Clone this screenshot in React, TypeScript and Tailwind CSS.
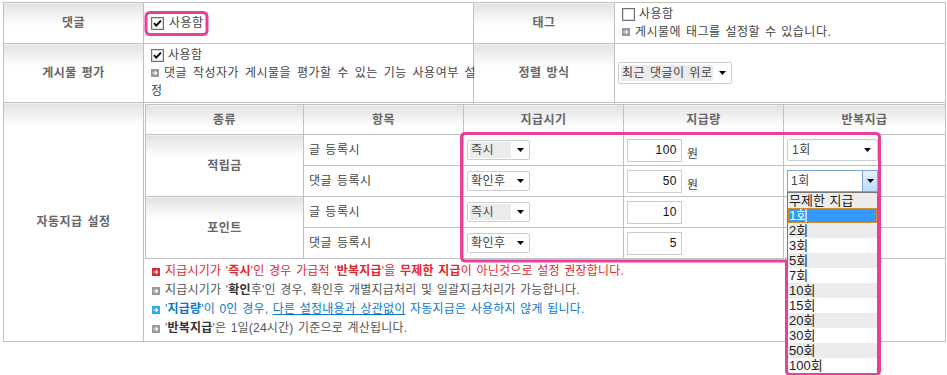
import React from "react";

const FONT = "font-['Liberation_Sans','Noto_Sans_CJK_KR',sans-serif]";
const TH =
  "border border-[#c1c1c1] bg-[linear-gradient(#e2e2e2,#fff_22px)] text-center font-bold text-[#666]";
const TD = "border border-[#c1c1c1] text-[#444]";

function CheckBox({ checked }: { checked?: boolean }) {
  return (
    <svg width="13" height="13" viewBox="0 0 13 13" className="shrink-0">
      <rect x="0.5" y="0.5" width="12" height="12" fill="#fff" stroke="#6f6f6f" />
      <rect x="1.5" y="1.5" width="10" height="10" fill="none" stroke="#dcdcdc" />
      {checked && (
        <path d="M3 6.2l2.2 2.4L10 3.6" fill="none" stroke="#000" strokeWidth="1.8" />
      )}
    </svg>
  );
}

function Bullet({ color }: { color: string }) {
  return (
    <svg width="8" height="8" viewBox="0 0 8 8" className="shrink-0">
      <rect width="8" height="8" fill={color} />
      <path d="M1.5 4h4M3.8 2.2L5.6 4 3.8 5.8" fill="none" stroke="#fff" strokeWidth="1.2" />
    </svg>
  );
}

function Caret() {
  return (
    <svg width="7" height="4" viewBox="0 0 7 4" className="shrink-0">
      <path d="M0 0h7L3.5 4z" fill="#000" />
    </svg>
  );
}

// closed select, old-style with grey highlighted value
function Select({ label, w, hl }: { label: string; w: string; hl?: boolean }) {
  return (
    <div
      className={`${w} flex items-center border border-[#cdcdcd] rounded-[2px] bg-white pl-[2px] pr-[5px] whitespace-nowrap`}
    >
      <span className={`flex-1 px-[1px] leading-[16px] ${hl ? "bg-[#ebebeb]" : ""}`}>{label}</span>
      <span className="ml-[6px] flex">
        <Caret />
      </span>
    </div>
  );
}

const repeatOptions = ["무제한 지급", "1회", "2회", "3회", "5회", "7회", "10회", "15회", "20회", "30회", "50회", "100회"];

function OpenSelect() {
  return (
    <div className="relative w-[91px]">
      <div className="h-[22px] flex items-center border border-[#7ea6d4] bg-white">
        <span className="flex-1 pl-[3px]">1회</span>
        <div className="w-[15px] h-full flex items-center justify-center border-l border-[#7ea6d4] bg-[linear-gradient(#e6f2fd,#b9dcf7)]">
          <Caret />
        </div>
      </div>
      <div className="absolute left-0 top-full w-[91px] border border-[#7a7a7a] bg-white z-10 text-[13px] text-[#222] tracking-normal">
        {repeatOptions.map((o, i) => (
          <div
            key={o}
            className={`h-[15px] leading-[15px] pl-[1px] ${
              i === 1
                ? "bg-[#3399ff] text-white outline-1 outline-dotted outline-[#e0a040] -outline-offset-1"
                : i % 2 === 0
                ? "bg-[#ececec]"
                : "bg-white"
            }`}
          >
            {o}
          </div>
        ))}
      </div>
    </div>
  );
}

function Amount({ value, unit }: { value: string; unit?: boolean }) {
  return (
    <div className="flex items-center pl-[3px]">
      <div className="w-[55px] h-[23px] border border-[#cdcdcd] text-right pr-[4px] leading-[21px] text-[#111]">
        {value}
      </div>
      {unit && <span className="ml-[5px] mt-[8px]">원</span>}
    </div>
  );
}

const rows = [
  { kind: "적립금", item: "글 등록시", when: "즉시", amount: "100", unit: true, repeat: "closed" },
  { kind: "", item: "댓글 등록시", when: "확인후", amount: "50", unit: true, repeat: "open" },
  { kind: "포인트", item: "글 등록시", when: "즉시", amount: "10", unit: false, repeat: "" },
  { kind: "", item: "댓글 등록시", when: "확인후", amount: "5", unit: false, repeat: "" },
];

export default function App() {
  return (
    <div className={`relative w-[947px] h-[375px] bg-white text-[12px] tracking-[0.5px] [word-spacing:1px] ${FONT}`}>
      <table className="table-fixed border-collapse ml-[3px] mt-[2px] w-[942px]">
        <colgroup>
          <col className="w-[140px]" />
          <col className="w-[330px]" />
          <col className="w-[141px]" />
          <col className="w-[331px]" />
        </colgroup>
        <tbody>
          <tr className="h-[41px]">
            <td className={TH}>댓글</td>
            <td className={`${TD} pl-[7px]`}>
              <label className="flex items-center">
                <CheckBox checked />
                <span className="ml-[5px]">사용함</span>
              </label>
            </td>
            <td className={TH}>태그</td>
            <td className={`${TD} pl-[7px] leading-[18px]`}>
              <div className="flex items-center">
                <CheckBox />
                <span className="ml-[4px]">사용함</span>
              </div>
              <div className="flex items-center">
                <Bullet color="#9a9a9a" />
                <span className="ml-[5px]">게시물에 태그를 설정할 수 있습니다.</span>
              </div>
            </td>
          </tr>
          <tr className="h-[59px]">
            <td className={TH}>게시물 평가</td>
            <td className={`${TD} pl-[7px] pr-0 leading-[18px]`}>
              <div className="flex items-center">
                <CheckBox checked />
                <span className="ml-[4px]">사용함</span>
              </div>
              <div className="whitespace-nowrap [word-spacing:2px]">
                <span className="inline-block align-middle mr-[5px] -mt-[2px]">
                  <Bullet color="#9a9a9a" />
                </span>
                댓글 작성자가 게시물을 평가할 수 있는 기능 사용여부 설
                <br />정
              </div>
            </td>
            <td className={TH}>정렬 방식</td>
            <td className={`${TD} pl-[3px]`}>
              <Select label="최근 댓글이 위로" w="w-[114px] h-[22px]" hl />
            </td>
          </tr>
          <tr>
            <td className={TH}>자동지급 설정</td>
            <td colSpan={3} className={`${TD} p-0 align-top`}>
              <table className="table-fixed border-collapse w-[800px] mt-px ml-px">
                <colgroup>
                  <col className="w-[158px]" />
                  <col className="w-[160px]" />
                  <col className="w-[160px]" />
                  <col className="w-[160px]" />
                  <col className="w-[162px]" />
                </colgroup>
                <thead>
                  <tr className="h-[30px]">
                    <th className={TH}>종류</th>
                    <th className={TH}>항목</th>
                    <th className={TH}>지급시기</th>
                    <th className={TH}>지급량</th>
                    <th className={TH}>반복지급</th>
                  </tr>
                </thead>
                <tbody>
                  {rows.map((r, i) => (
                    <tr key={i} className="h-[31px]">
                      {r.kind && (
                        <td rowSpan={2} className={TH}>
                          {r.kind}
                        </td>
                      )}
                      <td className={`${TD} pl-[5px]`}>{r.item}</td>
                      <td className={`${TD} pl-[3px]`}>
                        <Select label={r.when} w="w-[63px] h-[20px]" hl={r.when === "즉시"} />
                      </td>
                      <td className={TD}>
                        <Amount value={r.amount} unit={r.unit} />
                      </td>
                      <td className={`${TD} pl-[3px]`}>
                        {r.repeat === "closed" && (
                          <div className="w-[91px] h-[22px] flex items-center justify-between border border-[#cdcdcd] rounded-[2px] pl-[4px] pr-[6px]">
                            <span>1회</span>
                            <Caret />
                          </div>
                        )}
                        {r.repeat === "open" && <OpenSelect />}
                      </td>
                    </tr>
                  ))}
                </tbody>
              </table>
              <div className="pl-[8px] py-[3px] leading-[19px] tracking-[0.2px]">
                <div className="flex items-center text-[#e2262d]">
                  <Bullet color="#e2262d" />
                  <span className="ml-[5px]">
                    지급시기가 '<b>즉시</b>'인 경우 가급적 '<b>반복지급</b>'을 <b>무제한 지급</b>이 아닌것으로 설정 권장합니다.
                  </span>
                </div>
                <div className="flex items-center text-[#555]">
                  <Bullet color="#9a9a9a" />
                  <span className="ml-[5px]">
                    지급시기가 '<b className="text-[#333]">확인</b>후'인 경우, 확인후 개별지급처리 및 일괄지급처리가 가능합니다.
                  </span>
                </div>
                <div className="flex items-center text-[#0b78c6]">
                  <Bullet color="#2aaee4" />
                  <span className="ml-[5px]">
                    '<b>지급량</b>'이 0인 경우, <u>다른 설정내용과 상관없이</u> 자동지급은 사용하지 않게 됩니다.
                  </span>
                </div>
                <div className="flex items-center text-[#555]">
                  <Bullet color="#9a9a9a" />
                  <span className="ml-[5px]">
                    '<b className="text-[#333]">반복지급</b>'은 1일(24시간) 기준으로 계산됩니다.
                  </span>
                </div>
              </div>
            </td>
          </tr>
        </tbody>
      </table>

      {/* pink annotation marks */}
      <svg className="absolute inset-0 pointer-events-none z-20" width="947" height="375">
        <rect x="146" y="10.5" width="61" height="22" rx="4" fill="none" stroke="#e8409a" strokeWidth="3" />
        <path
          d="M465.5 131.5H875.5Q879.5 131.5 879.5 135.5V368.5Q879.5 372.5 875.5 372.5H790.5Q786.5 372.5 786.5 368.5V259H465.5Q461.5 259 461.5 255V135.5Q461.5 131.5 465.5 131.5Z"
          fill="none"
          stroke="#e8409a"
          strokeWidth="3"
        />
      </svg>
    </div>
  );
}
